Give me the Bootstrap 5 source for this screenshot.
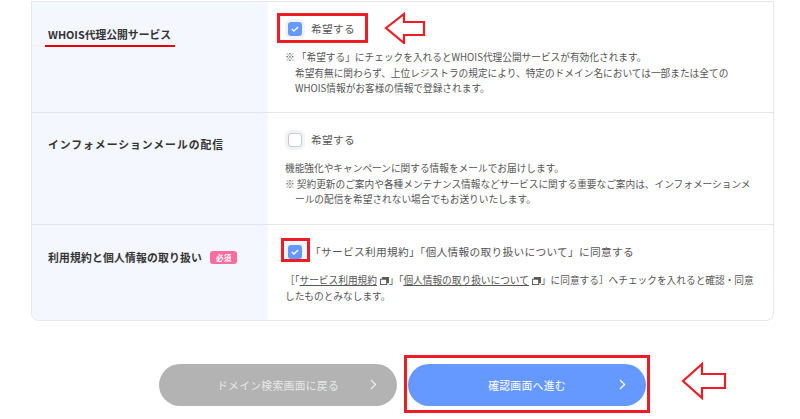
<!DOCTYPE html>
<html lang="ja">
<head>
<meta charset="utf-8">
<title>WHOIS</title>
<link rel="stylesheet" href="https://cdn.jsdelivr.net/npm/bootstrap@5.3.0/dist/css/bootstrap.min.css">
<style>
html,body{height:419px;overflow:hidden;background:#fff}
body{font-family:"Noto Sans CJK JP","Noto Sans",sans-serif;color:#555;position:relative}
.sheet{margin:1px 26px 0 31px;border:1px solid #e4e6ea;border-radius:0 0 8px 8px;overflow:hidden}
.fld{border-bottom:1px solid #e2e4e8}
.fld:last-child{border-bottom:0}
.fld-a{height:111px}.fld-b{height:112px}.fld-c{height:95px}
.lbl{width:236px;flex:none;background:#f4f7fe;padding:24px 0 0 16px;font-size:10.8px;line-height:16px;font-weight:700;color:#333;letter-spacing:.2px}
.lbl-wide{letter-spacing:1px;padding-top:23px}
.val{padding:17px 0 0 17px;flex:1;min-width:0}
.chkrow{height:20px;margin-left:3px}
.chk{width:14px;height:14px;border-radius:3px;background:#6699ff;flex:none;box-shadow:0 0 0 3px #f2f3f6}
.chk.off{background:#fff;border:1px solid #c4c7cd}
.chk-lbl{font-size:10.7px;color:#555;letter-spacing:.3px;white-space:nowrap}
.chk-gap{margin-left:1px}
.note{font-size:9.68px;line-height:15.5px;color:#555;margin:11px 0 0;white-space:nowrap}
.ind{display:block;padding-left:10px}
.req{background:#fb6d9d;color:#fff;font-size:7.5px;line-height:13px;height:13px;padding:0 6px;border-radius:3px;font-weight:700;margin-top:2px}
.pill{width:238px;height:42px;border-radius:21px;border:0;color:#fff;font-size:10.8px;letter-spacing:.3px;position:relative;padding:0}
.pill svg{position:absolute;right:20px;top:15px}
.pill-g{background:#b3b3b3;color:#e8e8e8}.pill-b{background:#6699ff}
.redbox{border:3px solid #ee1c25;position:absolute}
.mark-arrow{position:absolute}
.under{border-bottom:2px solid #e60012;padding:0 4px 3px 3px;display:inline-block;margin-left:-3px;letter-spacing:0}
a.ext{color:#555;text-decoration:underline}
.win{margin-left:3px}
.foot{gap:11px;margin-top:43px;padding-left:159px}
</style>
</head>
<body>
<div class="sheet">
  <div class="fld fld-a d-flex">
    <div class="lbl"><span class="under">WHOIS代理公開サービス</span></div>
    <div class="val">
      <div class="chkrow d-flex align-items-center gap-2"><span class="chk d-flex align-items-center justify-content-center"><svg width="8" height="6" viewBox="0 0 8 6"><path d="M.8 3l2 2L7.2.9" fill="none" stroke="#fff" stroke-width="1.3"/></svg></span><span class="chk-lbl chk-gap">希望する</span></div>
      <p class="note">※ 「希望する」にチェックを入れるとWHOIS代理公開サービスが有効化されます。<span class="ind">希望有無に関わらず、上位レジストラの規定により、特定のドメイン名においては一部または全ての</span><span class="ind">WHOIS情報がお客様の情報で登録されます。</span></p>
    </div>
  </div>
  <div class="fld fld-b d-flex">
    <div class="lbl lbl-wide">インフォメーションメールの配信</div>
    <div class="val">
      <div class="chkrow d-flex align-items-center gap-2"><span class="chk off"></span><span class="chk-lbl chk-gap">希望する</span></div>
      <p class="note">機能強化やキャンペーンに関する情報をメールでお届けします。<br>※ 契約更新のご案内や各種メンテナンス情報などサービスに関する重要なご案内は、インフォメーションメ<span class="ind">ールの配信を希望されない場合でもお送りいたします。</span></p>
    </div>
  </div>
  <div class="fld fld-c d-flex">
    <div class="lbl d-flex align-items-start gap-2"><span>利用規約と個人情報の取り扱い</span><span class="req">必須</span></div>
    <div class="val">
      <div class="chkrow d-flex align-items-center gap-2"><span class="chk d-flex align-items-center justify-content-center"><svg width="8" height="6" viewBox="0 0 8 6"><path d="M.8 3l2 2L7.2.9" fill="none" stroke="#fff" stroke-width="1.3"/></svg></span><span class="chk-lbl">「サービス利用規約」「個人情報の取り扱いについて」に同意する</span></div>
      <p class="note">［「<a class="ext" href="#">サービス利用規約</a><svg class="win" width="9" height="8" viewBox="0 0 10 9"><rect x="2.5" y=".5" width="7" height="6" fill="#555" stroke="#555"/><rect x=".5" y="2.5" width="7" height="6" fill="#fff" stroke="#555"/></svg>」「<a class="ext" href="#">個人情報の取り扱いについて</a><svg class="win" width="9" height="8" viewBox="0 0 10 9"><rect x="2.5" y=".5" width="7" height="6" fill="#555" stroke="#555"/><rect x=".5" y="2.5" width="7" height="6" fill="#fff" stroke="#555"/></svg>」に同意する］へチェックを入れると確認・同意<br>したものとみなします。</p>
    </div>
  </div>
</div>
<div class="foot d-flex">
  <button class="pill pill-g" type="button">ドメイン検索画面に戻る<svg width="7" height="11" viewBox="0 0 7 11"><path d="M1 1l4.5 4.5L1 10" fill="none" stroke="#eee" stroke-width="1.3"/></svg></button>
  <button class="pill pill-b" type="button">確認画面へ進む<svg width="7" height="11" viewBox="0 0 7 11"><path d="M1 1l4.5 4.5L1 10" fill="none" stroke="#fff" stroke-width="1.3"/></svg></button>
</div>
<div class="redbox" style="left:277px;top:13px;width:91px;height:30px"></div>
<div class="redbox" style="left:281px;top:238px;width:29px;height:24px"></div>
<div class="redbox" style="left:404px;top:355px;width:246px;height:58px"></div>
<svg class="mark-arrow" style="left:384px;top:12px" width="42" height="32" viewBox="0 0 42 32"><path d="M2 16L20 2v8h20v13H20v8z" fill="#fff" stroke="#ee1c25" stroke-width="2.2"/></svg>
<svg class="mark-arrow" style="left:681px;top:362px" width="46" height="38" viewBox="0 0 46 38"><path d="M2 19L21 2v10h23v14H21v10z" fill="#fff" stroke="#ee1c25" stroke-width="2.2"/></svg>
</body>
</html>
